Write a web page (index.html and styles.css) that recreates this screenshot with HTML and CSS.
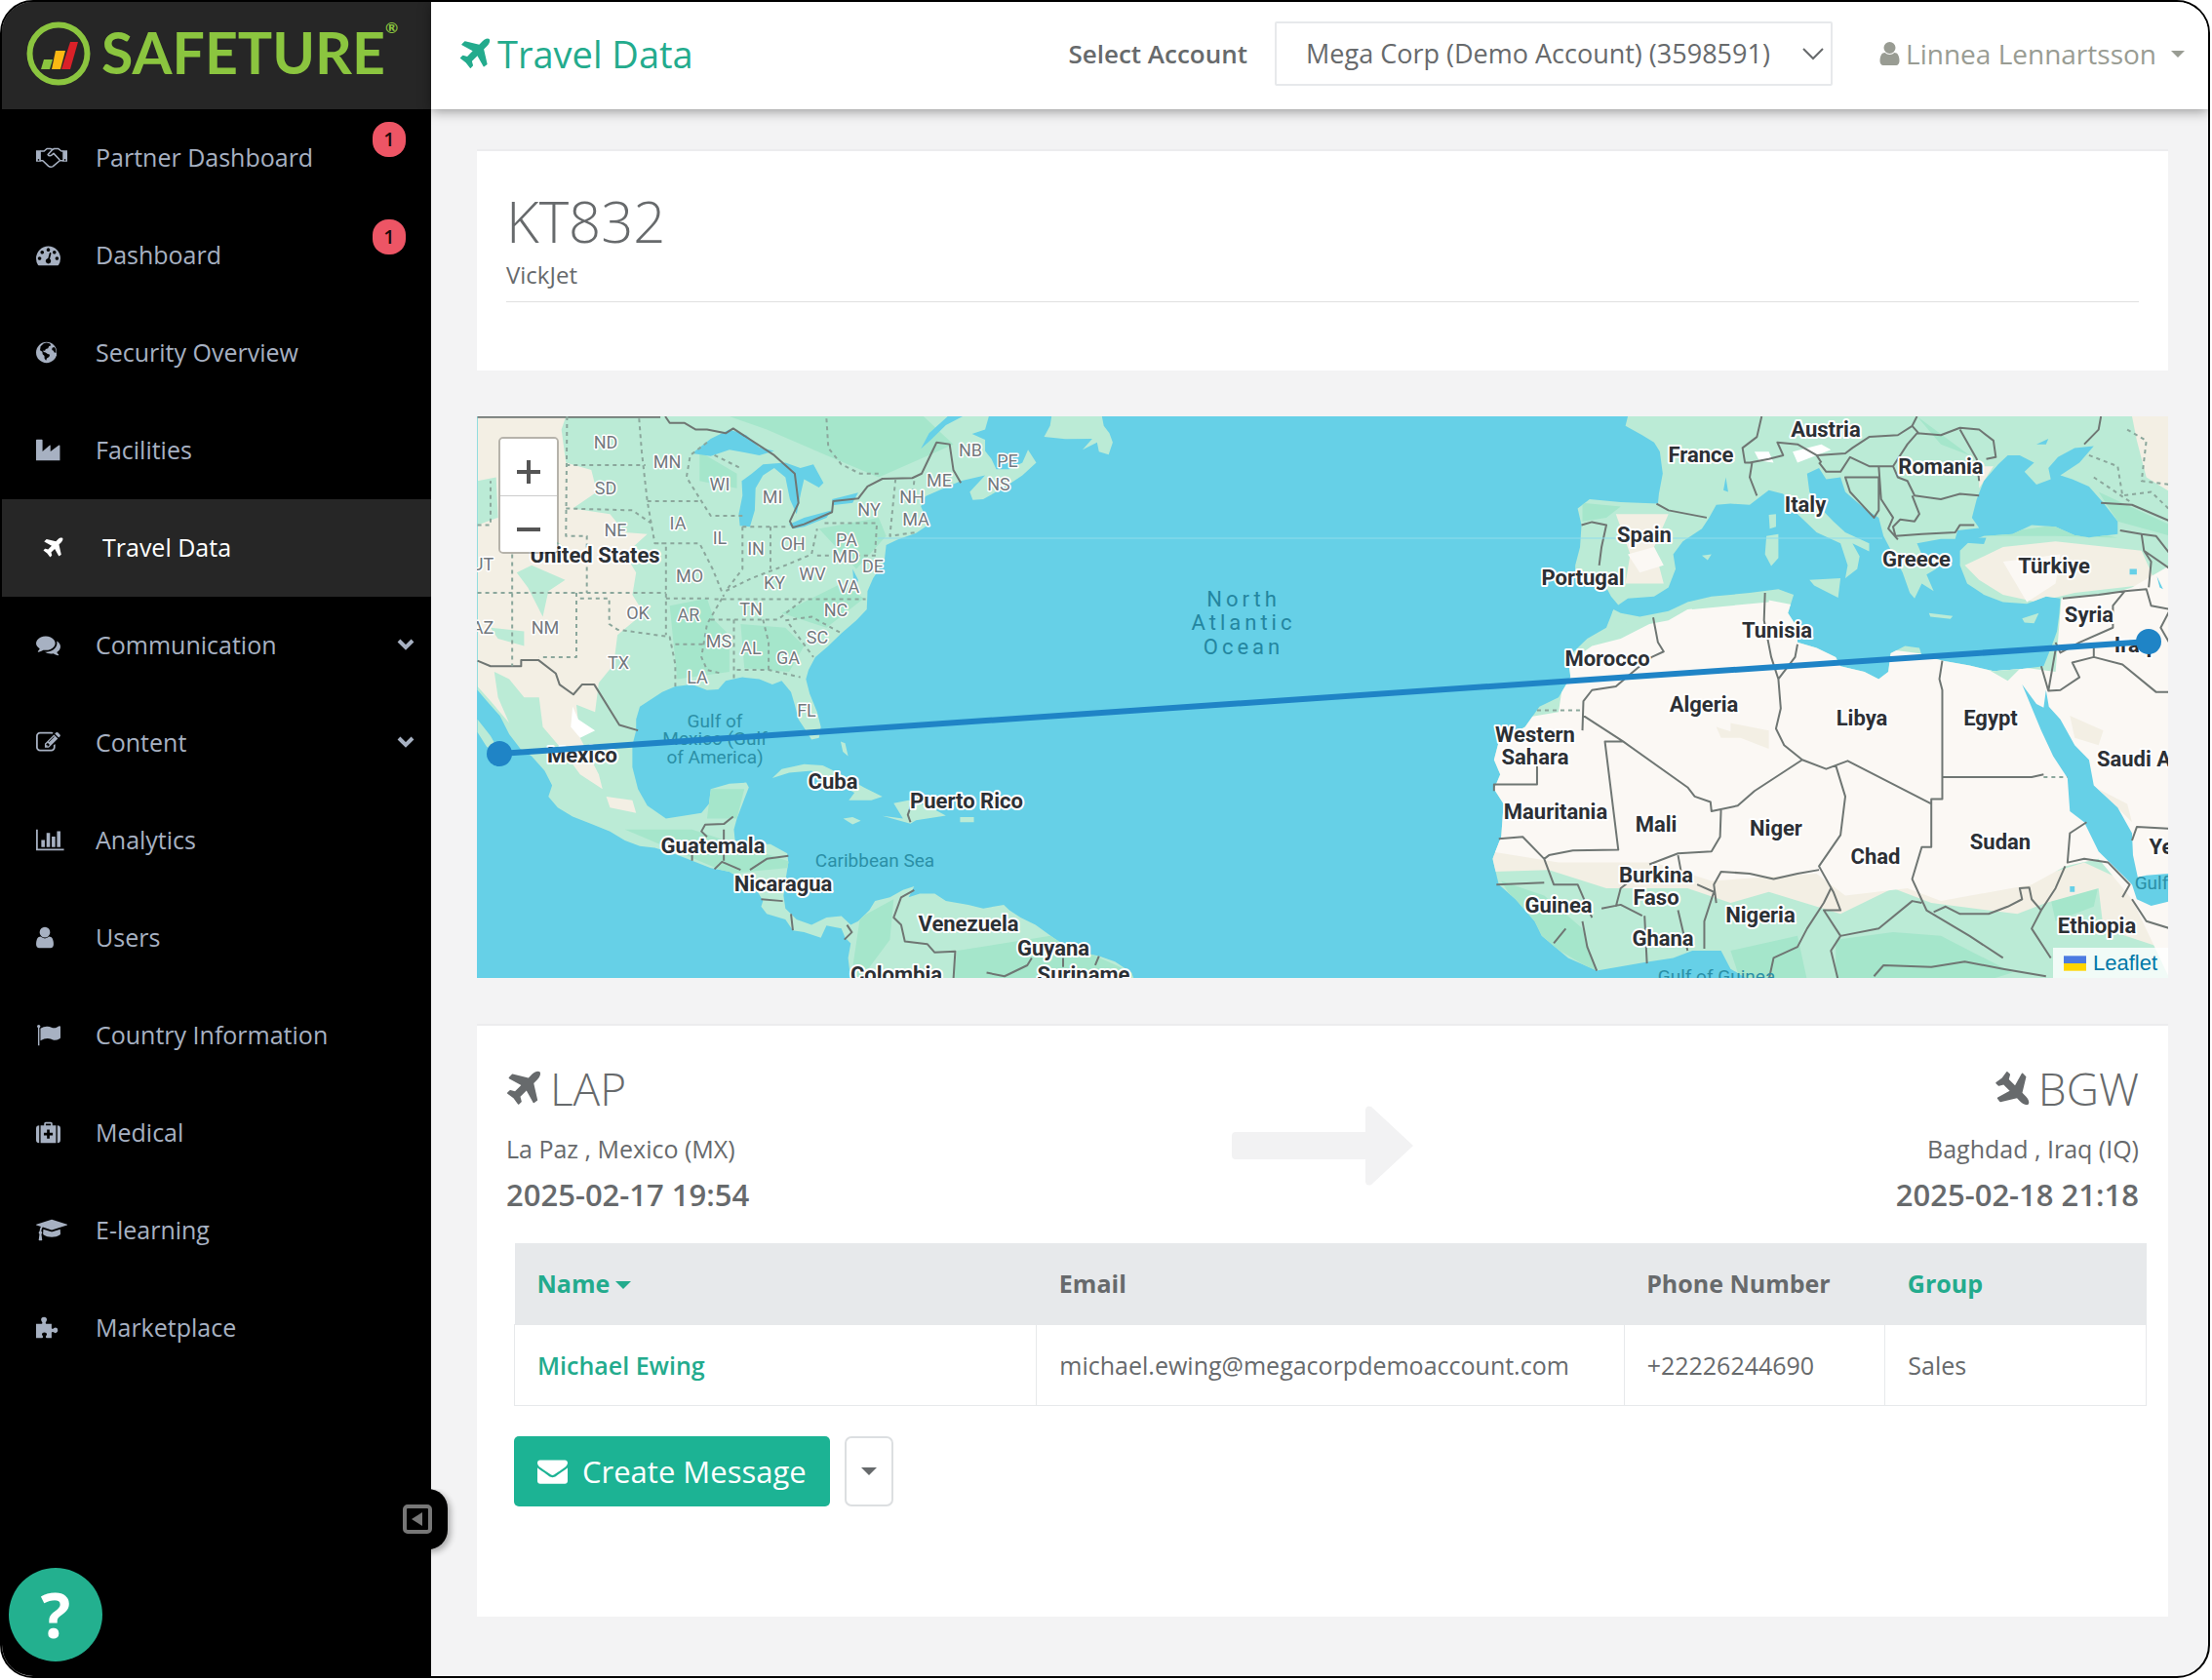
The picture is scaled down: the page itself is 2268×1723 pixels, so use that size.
FILE: index.html
```html
<!DOCTYPE html>
<html lang="en">
<head>
<meta charset="utf-8">
<title>Travel Data</title>
<link rel="stylesheet" href="styles.css">
</head>
<body>
<svg class="sprite" aria-hidden="true">
  <symbol id="plane" viewBox="150 108 1480 1480"><path d="M1568 160q44 52 12 148t-108 172l-161 161 160 696q5 19-12 33l-128 96q-7 6-19 6-4 0-7-1-15-3-21-16l-279-508-259 259 53 194q5 17-8 31l-96 96q-9 9-23 9h-2q-15-2-24-13l-189-252-252-189q-11-7-13-23-1-13 9-25l96-97q9-9 23-9 6 0 8 1l194 53 259-259-508-279q-14-8-17-24-2-16 9-27l128-128q14-13 30-8l665 159 160-160q76-76 172-108t148 12z"/></symbol>
  <symbol id="user" viewBox="256 0 1280 1792"><path d="M1536 1399q0 109-62.500 187t-150.500 78h-854q-88 0-150.500-78t-62.500-187q0-85 8.500-160.500t31.500-152 58.500-131 94-89 134.500-34.500q131 128 313 128t313-128q76 0 134.500 34.500t94 89 58.500 131 31.500 152 8.500 160.500zm-256-887q0 159-112.500 271.500t-271.500 112.500-271.500-112.500-112.500-271.500 112.500-271.500 271.500-112.500 271.500 112.500 112.500 271.500z"/></symbol>
</svg>
<div class="shell">
  <aside class="sidebar">
    <a class="brand" href="#" aria-label="Safeture">
      <svg class="brand-mark" viewBox="0 0 66 66"><circle cx="33" cy="33" r="29.500" fill="none" stroke="#8bc53f" stroke-width="6"/><path fill="#8bc53f" d="M18 39h9l-3 10h-9z"/><path fill="#fcb813" d="M30 30h10l-5 19h-9z"/><path fill="#da2128" d="M45 21h8l-8 28h-9z"/></svg>
      <span class="brand-name">SAFETURE</span><span class="brand-reg">®</span>
    </a>
    <nav class="menu">
      <a class="item" href="#"><span class="ico"><svg viewBox="0 0 2304 1792"><path fill="none" stroke="currentColor" stroke-width="110" stroke-linejoin="round" d="M300 430h290l200-180h270l140 70 130-70h290l240 180h150M1200 320L870 680q110 170 290 30l130-110 450 470M300 1130h190l420 400q150 120 330 20l500-420h260"/><path d="M0 380h350v820H0zM1954 380h350v820h-350z"/><circle cx="180" cy="1070" r="60" fill="#000"/><circle cx="2124" cy="1070" r="60" fill="#000"/></svg></span>Partner Dashboard<span class="badge">1</span></a>
      <a class="item" href="#"><span class="ico"><svg viewBox="0 0 1792 1792"><path d="M384 1152q0-53-37.500-90.500t-90.500-37.500-90.500 37.500-37.500 90.500 37.500 90.500 90.500 37.500 90.500-37.500 37.500-90.500zm192-448q0-53-37.500-90.500t-90.500-37.500-90.500 37.500-37.500 90.500 37.500 90.500 90.500 37.500 90.500-37.500 37.500-90.500zm428 481l101-382q6-26-7.500-48.500t-38.500-29.500-48 6.500-30 39.500l-101 382q-60 5-107 43.500t-63 98.500q-20 77 20 146t117 89 146-20 89-117q16-60-6-117t-72-91zm660-33q0-53-37.500-90.500t-90.500-37.500-90.500 37.500-37.500 90.500 37.500 90.500 90.500 37.500 90.500-37.500 37.500-90.500zm-640-640q0-53-37.500-90.500t-90.500-37.500-90.500 37.500-37.500 90.500 37.500 90.500 90.500 37.500 90.500-37.500 37.500-90.500zm448 192q0-53-37.500-90.500t-90.500-37.500-90.500 37.500-37.500 90.500 37.500 90.500 90.500 37.500 90.500-37.500 37.500-90.500zm320 448q0 261-141 483-19 29-54 29h-1402q-35 0-54-29-141-221-141-483 0-182 71-348t191-286 286-191 348-71 348 71 286 191 191 286 71 348z"/></svg></span>Dashboard<span class="badge">1</span></a>
      <a class="item" href="#"><span class="ico"><svg viewBox="0 0 1536 1792"><circle cx="768" cy="896" r="768"/><path fill="#000" d="M560 240l200-60 240 60 100 140-160 60-60 160-170 40-60 130-130-20 30 110 150 40 120 90 190 60-50 170-170 110-60 160-110-150-10-200-130-120-20-180-170-110 40-280zM1180 560l160-60 110 160 20 260-130-20-60-130-110-50z"/></svg></span>Security Overview</a>
      <a class="item" href="#"><span class="ico"><svg viewBox="0 0 1792 1792"><path d="M0 1664V180q0-52 52-52h368q52 0 52 52v826l520-446q64-50 64 32v414l600-446q96-60 96 32v1072z"/></svg></span>Facilities</a>
      <a class="item active" href="#"><span class="ico"><svg class="ico-plane"><use href="#plane"/></svg></span>Travel Data</a>
      <a class="item" href="#"><span class="ico"><svg viewBox="0 0 1792 1792"><path d="M1408 768q0 139-94 257t-256.500 186.500-353.500 68.500q-86 0-176-16-124 88-278 128-36 9-86 16h-3q-11 0-20.500-8t-11.500-21q-1-3-1-6.500t.5-6.500 2-6l2.500-5 3.500-5.500 4-5 4.500-5 4-4.500q5-6 23-25t26-29.500 22.500-29 25-38.500 20.500-44q-124-72-195-177t-71-224q0-139 94-257t256.500-186.500 353.500-68.500 353.500 68.500 256.500 186.500 94 257zm384 256q0 120-71 224.500t-195 176.500q10 24 20.500 44t25 38.500 22.500 29 26 29.500 23 25q1 1 4 4.500t4.500 5 4 5 3.500 5.500l2.500 5 2 6 .5 6.500-1 6.500q-3 14-13 22t-22 7q-50-7-86-16-154-40-278-128-90 16-176 16-271 0-472-132 58 4 88 4 161 0 309-45t264-129q125-92 192-212t67-254q0-77-23-152 129 71 204 178t75 230z"/></svg></span>Communication<svg class="chev" viewBox="0 0 18 12"><path d="M2 2l7 7 7-7"/></svg></a>
      <a class="item" href="#"><span class="ico"><svg viewBox="0 0 1792 1792"><path d="M888 1184l116-116-152-152-116 116v56h96v96h56zm440-720q-16-16-33 1l-350 350q-17 17-1 33t33-1l350-350q17-17 1-33zm80 594v190q0 119-84.500 203.500t-203.500 84.500h-832q-119 0-203.500-84.500t-84.500-203.500v-832q0-119 84.500-203.500t203.500-84.500h832q63 0 117 25 15 7 18 23 3 17-9 29l-49 49q-14 14-32 8-23-6-45-6h-832q-66 0-113 47t-47 113v832q0 66 47 113t113 47h832q66 0 113-47t47-113v-126q0-13 9-22l64-64q15-15 35-7t20 29zm-96-738l288 288-672 672h-288v-288zm444 132l-92 92-288-288 92-92q28-28 68-28t68 28l152 152q28 28 28 68t-28 68z"/></svg></span>Content<svg class="chev" viewBox="0 0 18 12"><path d="M2 2l7 7 7-7"/></svg></a>
      <a class="item" href="#"><span class="ico"><svg viewBox="0 0 2048 1792"><path d="M640 896v512h-256v-512h256zm384-512v1024h-256v-1024h256zm1024 1152v128h-2048v-1536h128v1408h1920zm-640-896v768h-256v-768h256zm384-384v1152h-256v-1152h256z"/></svg></span>Analytics</a>
      <a class="item" href="#"><span class="ico"><svg class="ico-user"><use href="#user"/></svg></span>Users</a>
      <a class="item" href="#"><span class="ico"><svg viewBox="0 0 1792 1792"><circle cx="192" cy="256" r="120"/><path d="M140 256h104v1408H140zM320 420q260-170 520-150 150 10 290 70 180 80 340 10l230-110q72-20 92 50v800q0 50-50 76-250 140-440 100-110-30-230-80-330-120-752 120z"/></svg></span>Country Information</a>
      <a class="item" href="#"><span class="ico"><svg viewBox="0 0 1792 1792"><path fill-rule="evenodd" d="M330 384h260V240q0-112 112-112h388q112 0 112 112v144h260v1280H330zM710 384h372V250H710zM800 680v230H570v196h230v230h196v-230h230V910H996V680z"/><path d="M230 384v1280q-230 0-230-230V614q0-230 230-230zM1562 384v1280q230 0 230-230V614q0-230-230-230z"/></svg></span>Medical</a>
      <a class="item" href="#"><span class="ico"><svg viewBox="0 0 2304 1792"><path d="M1774 836l18 316q4 69-82 128t-235 93.500-323 34.500-323-34.500-235-93.500-82-128l18-316 574 181q22 7 48 7t48-7zm530-324q0 23-22 31l-1120 352q-4 1-10 1t-10-1l-652-206q-43 34-71 111.500t-34 178.500q63 36 63 109 0 69-58 107l58 433q2 14-8 25-9 11-24 11h-192q-15 0-24-11-10-11-8-25l58-433q-58-38-58-107 0-73 65-111 11-207 98-330l-333-104q-22-8-22-31t22-31l1120-352q4-1 10-1t10 1l1120 352q22 8 22 31z"/></svg></span>E-learning</a>
      <a class="item" href="#"><span class="ico"><svg viewBox="0 0 1664 1792"><path d="M0 620h400q60 0 60-70 0-40-50-110-40-60-40-130 0-170 210-182 210 12 210 182 0 70-40 130-50 70-50 110 0 70 60 70h380v310q0 60 80 60 40 0 100-60 50-40 110-40 170 20 170 210t-170 210q-60 0-110-50-60-50-100-50-80 0-80 80v374H770q-60-10-60-80 0-30 40-90 40-50 40-110 0-130-180-134-180 4-180 134 0 60 40 110 40 60 40 90 0 70-60 80H0z"/></svg></span>Marketplace</a>
    </nav>
    <button class="collapse" type="button" aria-label="Collapse menu"><svg viewBox="0 0 30 30"><rect x="2" y="2" width="26" height="26" rx="3" fill="none" stroke="#777" stroke-width="4"/><path d="M20 8v14L9 15z" fill="#777"/></svg></button>
    <button class="help" type="button" aria-label="Help">?</button>
  </aside>
  <div class="page">
    <header class="topbar">
      <h1 class="title"><svg><use href="#plane"/></svg>Travel Data</h1>
      <label class="account-label" for="account">Select Account</label>
      <div class="account">
        <select id="account"><option>Mega Corp (Demo Account) (3598591)</option></select>
        <svg viewBox="0 0 24 14"><path d="M2 2l10 10L22 2"/></svg>
      </div>
      <button class="profile" type="button"><svg class="profile-ico"><use href="#user"/></svg>Linnea Lennartsson<span class="caret"></span></button>
    </header>
    <main class="content">
      <section class="card flight">
        <h2>KT832</h2>
        <p>VickJet</p>
        <hr>
      </section>
      <section class="map">
        <svg class="map-art" viewBox="489 429 1734 576" role="img" aria-label="Route from La Paz to Baghdad">
          <defs>
            <path id="americas" d="M25 24H1395L1385 60 1350 72 1385 88 1385 118 1402 140 1415 168 1450 168 1485 150 1500 115 1522 150 1485 185 1440 215 1380 250 1352 252 1344 230 1385 185 1320 200 1270 222 1225 242 1213 270 1235 318 1200 342 1150 360 1120 375 1115 420 1085 465 1070 500 1068 550 1040 580 1000 615 965 650 930 680 912 715 905 740 915 780 935 830 945 870 940 900 920 905 905 880 885 850 875 810 865 775 840 745 815 755 780 740 735 735 710 740 690 745 670 768 640 770 600 755 555 760 520 775 490 795 460 815 450 850 450 880 440 920 440 980 455 1040 480 1085 530 1120 580 1112 625 1105 645 1080 650 1040 700 1025 745 1022 752 1035 735 1080 720 1120 712 1150 715 1180 760 1190 810 1190 855 1215 858 1240 850 1290 845 1330 850 1365 880 1395 920 1410 960 1390 1000 1386 1025 1410 1045 1400 1075 1370 1090 1345 1130 1335 1165 1315 1195 1305 1180 1335 1210 1325 1250 1325 1280 1345 1340 1355 1380 1365 1435 1355 1450 1370 1480 1390 1520 1410 1568 1445 1620 1480 1690 1495 1733 1510 1777 1540 1785 1560H1025L1018 1500 1025 1460 1010 1445 1000 1420 960 1412 945 1445 900 1430 870 1425 850 1395 800 1380 785 1360 790 1345 770 1310 740 1290 700 1265 650 1255 600 1235 550 1215 500 1200 460 1195 420 1180 380 1155 330 1135 280 1115 240 1090 215 1060 225 1030 205 990 170 950 140 930 110 890 85 840 50 800 25 770ZM25 850L60 895 88 945 50 925 25 885ZM1563 24L1559 50 1543 80 1600 86 1672 85 1646 115 1685 95 1690 120 1716 128 1727 95 1718 70 1703 50 1698 24ZM815 1010L840 985 900 972 950 975 1000 1000 1060 1035 1110 1060 1080 1070 1020 1070 1035 1050 980 1020 920 990 860 995ZM1005 1120L1030 1116 1052 1126 1030 1136ZM1110 1113L1165 1120 1140 1078 1180 1070 1240 1090 1280 1112 1200 1125 1185 1134ZM1318 1116H1355V1130H1318ZM998 910L1010 915 1018 950 1004 938Z"/>
            <path id="oldworld" d="M345 24L340 50 375 75 400 95 412 120 418 180 410 235 408 262 330 258 265 250 240 275 248 320 245 380 235 430 235 460 265 485 300 490 310 515 325 538 345 520 400 515 430 490 445 440 440 400 460 365 500 330 515 300 530 265 560 262 600 265 640 225 670 235 700 290 740 340 790 370 805 430 800 465 825 440 830 405 815 370 850 392 850 370 800 340 775 310 745 270 725 230 720 180 745 165 760 195 790 190 800 230 840 275 870 300 880 350 900 400 920 450 935 505 945 520 960 480 985 500 970 455 990 440 960 400 950 370 1000 358 1030 358 1035 335 1080 328 1065 300 1075 250 1090 200 1120 155 1140 130 1165 130 1195 150 1175 175 1200 210 1230 195 1225 165 1245 135 1280 110 1320 105 1290 150 1250 185 1275 195 1310 215 1340 260 1370 310 1370 345 1310 354 1280 348 1240 325 1190 320 1150 345 1090 350 1060 365 1040 390 1040 430 1055 480 1090 510 1130 530 1180 535 1220 515 1250 520 1248 560 1243 610 1232 650 1215 705 1170 712 1110 718 1060 703 1005 690 960 675 955 655 925 650 895 670 890 720 870 740 840 720 790 705 780 680 740 655 700 640 700 600 680 560 692 510 660 495 600 505 520 515 470 530 430 555 370 570 330 560 315 550 300 600 260 630 220 680 225 735 200 790 160 815 130 870 75 910 65 960 78 1000 65 1040 85 1080 80 1170 62 1230 75 1300 110 1340 150 1400 165 1440 220 1500 280 1535 380 1512 440 1500 480 1480 540 1480 560 1530 600 1560H1480V24ZM725 470L790 465 785 518 735 485ZM635 350L660 345 660 410 645 432 632 400ZM640 292L655 290 655 325 642 330ZM975 560L1025 568 1020 576 978 570ZM1170 575L1205 560 1195 588 1175 586ZM500 403L520 400 512 416Z"/>
            <clipPath id="clip-americas"><use href="#americas"/></clipPath>
            <clipPath id="clip-oldworld"><use href="#oldworld"/></clipPath>
          </defs>
          <rect class="sea" x="489" y="429" width="1734" height="576"/>
          <g transform="translate(480 420) scale(.3827 .3763)">
            <use class="land" href="#americas"/>
            <g clip-path="url(#clip-americas)">
              <path class="forest" d="M700 24L800 60 960 130 1100 190 1300 100 1220 24ZM540 540L640 520 660 580 700 620 700 720 560 740ZM730 590L850 600 900 650 860 720 740 710ZM620 120L720 180 720 220 620 200ZM840 560L1000 480 1060 520 960 600ZM650 1040H740L720 1120 640 1120ZM420 1150L600 1150 900 1250 700 1270ZM1310 1480L1560 1440 1780 1540V1560H1300ZM940 330L1100 300 1120 350 1040 440ZM1050 1390L1140 1340 1130 1450 1050 1560H1025Z"/>
              <path class="steppe" d="M25 24H262L250 60 262 150 330 170 345 230 280 275 380 290 420 340 480 345 420 400 450 450 440 510 470 560 400 620 390 700 350 750 340 830 290 810 300 900 350 1000 360 1040 300 1000 250 930 200 870 190 790 150 790 110 740 70 720 80 790 110 860 60 800 25 760ZM370 1060L440 1070 450 1105 380 1090Z"/>
              <path class="land" d="M130 450L170 430 260 470 215 500 200 570 160 490ZM25 200L75 190 80 300 25 320ZM60 600L150 610 150 650 80 630ZM180 330L260 380 150 380Z"/>
              <path class="snow" d="M280 815L295 850 340 880 300 900 275 870Z"/>
            </g>
            <path class="sea" d="M600 125L650 85 700 60 745 75 780 108 820 118 780 130 740 122 700 115 650 132ZM733 200L760 180 790 155 850 150 890 165 925 155 952 205 940 218 900 195 892 230 880 290 862 250 850 190 820 165 790 185 770 220 768 280 755 325 728 322 725 290 735 240ZM860 318L900 300 975 280 960 300 900 325 870 330ZM975 250L1045 232 1030 260 980 266ZM1213 112L1235 70 1285 24H1325L1280 48 1240 88ZM1030 440L1045 470 1035 500Z"/>
            <path class="border" d="M25 26H515M528 24L540 42 580 42 610 60 640 60 690 70 710 57 820 130 875 180 885 260 862 310 870 327 900 318 975 285 978 255 1045 248 1070 215 1110 194 1190 192 1215 180 1255 95 1290 100 1300 170 1320 205M25 690L60 705H142V688H188L235 725 245 755 282 782 305 755H338L405 865 455 880M710 1115L685 1135 635 1137 625 1155 640 1170M685 1150V1235M600 1210V1235M660 1258L680 1238 730 1260M755 1260L800 1230 858 1222M785 1340L843 1345M865 1380L870 1425M1015 1410L1028 1430 1008 1450M1195 1315L1160 1335 1140 1390 1160 1410 1170 1455 1230 1462 1250 1485 1305 1482 1300 1560M1389 1540L1437 1550 1498 1520 1510 1500M1594 1500V1525M1690 1495L1680 1520M1190 1075L1178 1110 1185 1130"/>
            <path class="border state" d="M265 24L262 350H318V505M262 157H475M458 30L465 120 480 255 500 370 530 370V620M262 275L440 280 490 315M480 255H625M500 370H620L655 440 685 515M640 95L595 130 585 190 625 255 650 295H735M660 130L730 165M25 505H530M118 400V705M290 505V680H190M300 520H378V590L400 605 540 625 555 700V760M530 520H655M555 645H630M735 325V440L690 500 760 465 850 430 920 400 935 330M810 325V440M735 325H860M660 522H1065M650 578H830L895 525M712 578V740M790 578L805 640V720M720 715H805L890 735M680 520L640 590 625 680 640 715 680 725M860 590L925 680M850 580L920 570 1000 615M935 403H1095M955 315H1095L1090 400M1145 195L1130 350 1200 340M960 30L965 110 1000 155 1050 180H1110M1195 200L1190 250M25 320H60V200"/>
          </g>
          <g transform="translate(1500 420) scale(.49 .3763)">
            <use class="land" href="#oldworld"/>
            <g clip-path="url(#clip-oldworld)">
              <path class="forest" d="M80 1290L170 1330 250 1420 280 1540 150 1440ZM780 1450L900 1430 1000 1440 1150 1540 1100 1560H780ZM1230 1340L1330 1300 1320 1360 1240 1400ZM560 1480L700 1440 720 1560H580ZM250 260L330 270 300 300 250 310ZM950 24L1060 130 1000 100ZM1080 350L1240 320 1370 355 1240 350ZM1330 230L1480 320V350L1370 310Z"/>
              <path class="steppe" d="M60 1180L300 1190 600 1240 900 1280 1200 1280 1300 1240 1400 1300 1480 1380V1480L1340 1420 1330 1310 1220 1350 1160 1380 980 1350 900 1310 790 1380 640 1320 560 1350 470 1310 300 1310 180 1260 60 1265ZM1050 430L1130 380 1240 365 1420 390 1450 480 1280 505 1200 530 1130 510 1080 470ZM320 290L430 290 400 380 420 480 340 480 350 400ZM1400 24H1480V230L1430 190 1410 90ZM1080 160L1110 160 1080 220Z"/>
              <path class="desert" d="M200 830L215 700 270 650 330 630 390 590 430 580 470 550 640 525 700 540 780 640 1240 720 1252 520 1350 510 1400 490 1480 430V1560L1400 1340 1330 1230 1260 1250 1190 1300 1000 1345 930 1310 800 1330 740 1270 520 1290 400 1240 200 1240 60 1210V860ZM345 400L400 380 420 430 370 450ZM1130 420L1250 400 1240 480 1180 530Z"/>
              <path class="steppe" d="M560 860L640 880 640 930 560 890ZM1270 840L1340 880 1330 920 1280 900ZM1330 1040L1390 1080 1400 1130ZM530 870L600 900 540 900Z"/>
              <path class="snow" d="M610 120L640 120 650 150 620 145ZM690 120L750 100 770 115 700 150Z"/>
              <path class="land" d="M1100 715L1145 690 1165 712 1140 745ZM470 530L640 505 640 530 480 550ZM310 550L345 590 320 620Z"/>
            </g>
            <path class="sea" d="M1170 755L1200 808 1215 818 1220 770 1226 815 1250 850 1280 920 1310 960 1320 1030 1370 1090 1400 1160 1402 1220 1412 1280 1430 1275 1480 1270V1345L1440 1358 1410 1340 1400 1300 1385 1280 1330 1210 1300 1130 1270 1100 1265 1010 1235 950 1210 880ZM1040 355L1095 355 1090 372 1045 368ZM1200 100L1225 85 1220 100ZM1395 440H1410V455H1395ZM1452 460L1465 495 1458 490ZM1270 1305H1280V1320H1270ZM550 190L555 230 545 225Z"/>
            <path class="border" d="M398 572L408 640 420 665 395 680 365 710 320 760 270 770 252 800 250 880M155 960V1027H65V1045M250 838L335 910 470 1035 485 1060 518 1075 520 1100 575 1085 610 1045 710 960 760 985 805 963 980 1080M335 910H297L325 1205 230 1207 180 1220 170 1230M75 1175L125 1170 170 1230 190 1300 240 1300 270 1390M540 1095L538 1170 520 1210 450 1215 390 1245M780 975L800 1060 790 1165 745 1250 775 1320 790 1370 755 1370 790 1440 770 1480 785 1560M530 1350L525 1300 540 1265 600 1270 650 1285 700 1270 745 1260M632 505L630 580 645 680 660 740 665 820 655 875 672 920 710 960M700 645L695 680 660 740M1003 690L997 740 1003 770V1067H980V1198H960L940 1285 970 1370 1060 1440 1130 1500M1003 1007H1190L1215 1000M790 1440L870 1420 940 1345 960 1350M985 1375L1010 1360 1040 1380 1100 1380 1140 1360 1170 1340 1165 1310 1185 1308 1190 1340 1210 1370 1190 1420 1230 1500M1305 1130L1270 1160 1265 1240 1300 1230 1350 1240 1395 1300 1380 1335M1400 1340L1430 1400 1480 1420M1260 1250L1240 1310 1210 1370M1400 1180L1410 1143 1480 1148M490 1300L525 1320 505 1400V1475M450 1370L470 1480M450 1220L460 1290M380 1385L385 1515M290 1365L330 1355 375 1385M320 1360L330 1310 380 1260M70 1300L170 1295M215 1420L190 1460M250 1400L260 1470 280 1535M640 1560L650 1500 700 1470 720 1420 755 1350 770 1310M860 1550L880 1520 980 1525 1050 1510 1130 1530 1220 1550M1255 520L1330 510 1385 500 1360 540V600L1290 640 1250 668 1240 640M1385 500L1430 495 1440 540 1480 550 1460 600 1480 645M1320 655V680L1380 700 1450 775H1480M1320 680L1275 695 1290 735 1250 770 1225 772 1240 660M1225 772L1210 705M1375 335L1420 345 1425 390 1440 420 1435 490M1425 390L1480 440M1335 260L1400 265 1480 310M1420 345L1450 350 1480 400"/>
            <path class="border" d="M405 262L430 280 510 300M248 320L270 312 300 320 290 380 285 430M625 24L615 80 585 110 590 150 605 150 600 190 615 240M600 150L640 140 670 130 658 95 700 100 740 130 800 125 815 110 850 80 910 75 940 50 950 24M745 150L760 175 790 175 810 135 850 160 900 160 930 100 950 70 1000 75 1040 55 1080 60 1110 90 1115 135 1095 140M940 50L955 72M1040 60L1075 140 1080 200M900 160L910 190 930 200 945 240 1000 250 1040 235 1080 240M800 190H870V280L860 300 810 230ZM870 160L875 250 900 300 890 330 910 360M940 240L955 290 945 310 915 305 900 325 905 350 960 345 1030 340 1040 320 1070 320M1335 24L1330 60 1300 100M740 130L750 150"/>
            <path class="border state" d="M155 825H250M1215 1007H1265M1310 130L1370 160 1380 240 1440 230 1480 280M1390 60L1430 90 1420 200 1480 210M1320 190L1400 260"/>
          </g>
          <path class="tile-seam" d="M900 554H1930"/>
          <g class="states">
            <text x="621" y="462">ND</text><text x="621" y="509">SD</text><text x="631" y="552">NE</text><text x="684" y="482">MN</text><text x="695" y="545">IA</text><text x="738" y="505">WI</text><text x="792" y="518">MI</text><text x="738" y="560">IL</text><text x="775" y="571">IN</text><text x="813" y="566">OH</text><text x="707" y="599">MO</text><text x="794" y="606">KY</text><text x="833" y="597">WV</text><text x="868" y="562">PA</text><text x="867" y="579">MD</text><text x="895" y="589">DE</text><text x="870" y="610">VA</text><text x="857" y="634">NC</text><text x="770" y="633">TN</text><text x="706" y="639">AR</text><text x="654" y="637">OK</text><text x="559" y="652">NM</text><text x="495" y="652">AZ</text><text x="495" y="587">UT</text><text x="634" y="688">TX</text><text x="737" y="666">MS</text><text x="770" y="673">AL</text><text x="808" y="683">GA</text><text x="838" y="662">SC</text><text x="715" y="703">LA</text><text x="827" y="737">FL</text><text x="891" y="531">NY</text><text x="935" y="518">NH</text><text x="939" y="541">MA</text><text x="963" y="501">ME</text><text x="995" y="470">NB</text><text x="1033" y="481">PE</text><text x="1024" y="505">NS</text>
          </g>
          <g class="waters">
            <text x="733" y="748">Gulf of</text><text x="733" y="766">Mexico (Gulf</text><text x="733" y="785">of America)</text><text x="897" y="891">Caribbean Sea</text><text x="2206" y="914">Gulf</text><text x="1760" y="1010">Gulf of Guinea</text>
          </g>
          <g class="ocean"><text x="1275" y="624">North</text><text x="1275" y="648">Atlantic</text><text x="1275" y="673">Ocean</text></g>
          <g class="countries">
            <text x="610" y="579">United States</text><text x="597" y="784">Mexico</text><text x="854" y="811">Cuba</text><text x="991" y="831">Puerto Rico</text><text x="731" y="877">Guatemala</text><text x="803" y="916">Nicaragua</text><text x="993" y="957">Venezuela</text><text x="1080" y="982">Guyana</text><text x="1111" y="1009">Suriname</text><text x="919" y="1009">Colombia</text>
            <text x="1872" y="450">Austria</text><text x="1744" y="476">France</text><text x="1990" y="488">Romania</text><text x="1851" y="527">Italy</text><text x="1686" y="558">Spain</text><text x="1623" y="602">Portugal</text><text x="1965" y="583">Greece</text><text x="2106" y="590">Türkiye</text><text x="2142" y="640">Syria</text><text x="2187" y="671">Iraq</text><text x="1822" y="656">Tunisia</text><text x="1648" y="685">Morocco</text><text x="1747" y="732">Algeria</text><text x="1909" y="746">Libya</text><text x="2041" y="746">Egypt</text><text x="1574" y="763">Western</text><text x="1574" y="786">Sahara</text><text x="1595" y="842">Mauritania</text><text x="1698" y="855">Mali</text><text x="1821" y="859">Niger</text><text x="1923" y="888">Chad</text><text x="2051" y="873">Sudan</text><text x="2188" y="788">Saudi A</text><text x="2216" y="878">Ye</text><text x="1698" y="907">Burkina</text><text x="1698" y="930">Faso</text><text x="1598" y="938">Guinea</text><text x="1705" y="972">Ghana</text><text x="1805" y="948">Nigeria</text><text x="2150" y="959">Ethiopia</text>
          </g>
          <path class="route" d="M512 775L2203 660"/>
          <circle class="stop" cx="512" cy="775" r="13"/><circle class="stop" cx="2203" cy="660" r="13"/>
        </svg>
        <div class="zoom">
          <button type="button" aria-label="Zoom in"><svg viewBox="0 0 24 24"><path d="M12 0v24M0 12h24"/></svg></button>
          <button type="button" aria-label="Zoom out"><svg viewBox="0 0 24 24"><path d="M0 12h24"/></svg></button>
        </div>
        <a class="leaflet" href="#"><svg viewBox="0 0 12 8"><path fill="#4c7be1" d="M0 0h12v4H0z"/><path fill="#ffd500" d="M0 4h12v4H0z"/></svg>Leaflet</a>
      </section>
      <section class="card trip">
        <div class="legs">
          <div class="leg">
            <h3><svg><use href="#plane"/></svg>LAP</h3>
            <p>La Paz , Mexico (MX)</p>
            <time>2025-02-17 19:54</time>
          </div>
          <svg class="arrow" viewBox="0 0 186 82"><path d="M4 27H137V4q1-5 6-3l43 40-43 40q-5 2-6-3V55H4q-4 0-4-4V31q0-4 4-4z"/></svg>
          <div class="leg arrive">
            <h3><svg class="landing"><use href="#plane"/></svg>BGW</h3>
            <p>Baghdad , Iraq (IQ)</p>
            <time>2025-02-18 21:18</time>
          </div>
        </div>
        <div class="travellers">
          <table>
            <thead><tr><th class="c-name"><a href="#">Name<span class="caret"></span></a></th><th class="c-mail">Email</th><th class="c-phone">Phone Number</th><th class="c-group"><a href="#">Group</a></th></tr></thead>
            <tbody><tr><td><a href="#">Michael Ewing</a></td><td>michael.ewing@megacorpdemoaccount.com</td><td>+22226244690</td><td>Sales</td></tr></tbody>
          </table>
          <div class="actions">
            <button class="create" type="button"><svg viewBox="0 0 1792 1792"><path d="M1792 710v794q0 66-47 113t-113 47h-1472q-66 0-113-47t-47-113v-794q44 49 101 87 362 246 497 345 57 42 92.500 65.500t94.500 48 110 24.500h2q51 0 110-24.500t94.500-48 92.500-65.500q170-123 498-345 57-39 100-87zm0-294q0 79-49 151t-122 123q-376 261-468 325-10 7-42.500 31t-54 38.500-52 32.500-57.500 27-50 9h-2q-23 0-50-9t-57.500-27-52-32.500-54-38.500-42.500-31q-91-64-262-182.500t-205-142.500q-62-42-117-115.500t-55-136.500q0-78 41.500-130t118.500-52h1472q65 0 112.500 47t47.500 113z"/></svg>Create Message</button>
            <button class="more" type="button" aria-label="More actions"><span class="caret"></span></button>
          </div>
        </div>
      </section>
    </main>
  </div>
</div>
</body>
</html>
```
FILE: styles.css
```css
* { box-sizing: border-box; }
body { margin: 0; background: #fff; color: #676a6c; font: 25px/36px "Open Sans", sans-serif; }
h1, h2, h3, p { margin: 0; }
a { color: inherit; text-decoration: none; }
button { font: inherit; color: inherit; border: 0; background: none; padding: 0; cursor: pointer; }
svg { display: block; flex: none; fill: currentColor; }
.sprite { position: absolute; width: 0; height: 0; }
.shell { display: flex; min-height: calc(100vh - 2px); margin: 0 2px 2px 0; border: 2px solid #000; border-radius: 34px; overflow: hidden; background: #f3f3f4; }

.sidebar { position: relative; flex: 0 0 440px; background: #000; color: #a7b1c2; }
.brand { display: flex; align-items: flex-start; height: 110px; padding: 20px 0 0 25px; background: #262626; color: #8bc53f; }
.brand-mark { width: 66px; height: 66px; }
.brand-name { margin-left: 11px; font: 700 59px/64px Lato, sans-serif; }
.brand-reg { font: 700 16px/12px Lato, sans-serif; }
.item { position: relative; display: flex; align-items: center; height: 100px; padding: 0 0 2px 35px; font-size: 25px; }
.item.active { background: #262626; color: #fff; padding-left: 42px; }
.ico { width: 61px; }
.ico svg { height: 25px; width: auto; }
.ico .ico-plane { width: 21px; height: 21px; }
.ico .ico-user { width: 18px; height: 25px; }
.badge { position: absolute; right: 26px; top: 13px; width: 34px; height: 36px; border-radius: 16px; background: #ed5565; color: #1c0a0c; font: 600 20px/36px "Open Sans", sans-serif; text-align: center; }
.chev { margin: 0 17px 0 auto; width: 18px; height: 12px; fill: none; stroke: currentColor; stroke-width: 4; }
.collapse { position: absolute; z-index: 3; right: -17px; bottom: 130px; display: flex; align-items: center; width: 60px; height: 62px; padding-left: 14px; border-radius: 0 20px 20px 0; background: #000; box-shadow: 3px 3px 6px rgba(0, 0, 0, .3); clip-path: inset(0 -12px -12px 0); }
.collapse svg { width: 30px; height: 30px; }
.help { position: absolute; left: 7px; bottom: 15px; width: 96px; height: 96px; border-radius: 50%; background: #23b08f; color: #fff; font: 700 64px/96px "Open Sans", sans-serif; }

.page { flex: 1; min-width: 0; }
.topbar { position: relative; display: flex; align-items: center; height: 110px; padding: 0 24px 4px 29px; background: #fff; box-shadow: 0 2px 12px rgba(0, 0, 0, .4); }
.title { display: flex; align-items: center; gap: 7px; margin-right: auto; color: #23ab8d; font: 400 38px/52px "Open Sans", sans-serif; }
.title svg { width: 32px; height: 32px; }
.account-label { font-weight: 600; font-size: 26px; margin-right: 28px; }
.account { position: relative; width: 572px; }
.account select { appearance: none; width: 100%; height: 66px; padding: 0 60px 0 30px; border: 2px solid #e7e9eb; border-radius: 2px; background: #fff; color: #676a6c; font: 27px/36px "Open Sans", sans-serif; }
.account svg { position: absolute; right: 8px; top: 26px; width: 24px; height: 14px; fill: none; stroke: #676a6c; stroke-width: 2; pointer-events: none; }
.profile { display: flex; align-items: center; margin-left: 48px; color: #999c93; font-size: 28px; }
.profile-ico { width: 21px; height: 28px; margin-right: 6px; }
.caret { display: inline-block; border: 7px solid transparent; border-top-color: currentColor; border-bottom: 0; }
.profile .caret { margin-left: 15px; }

.content { display: flex; flex-direction: column; gap: 47px; padding: 41px 41px 57px 47px; }
.card { background: #fff; border-top: 2px solid #ececee; padding: 30px; }
.flight { padding-bottom: 70px; }
.flight h2 { font: 300 58px/83px "Open Sans", sans-serif; }
.flight p { font-size: 24px; line-height: 28px; }
.flight hr { margin: 13px 0 0; border: 0; border-top: 1px solid #e0e0e0; }

.map { position: relative; }
.map-art { width: 100%; height: auto; }
.sea { fill: #66d0e7; }
.land { fill: #bbebd6; }
.forest { fill: #a5e6cb; }
.steppe { fill: #f3efe4; }
.desert { fill: #fbf8f4; }
.snow { fill: #fff; }
.border { fill: none; stroke: #6f7673; stroke-width: 2; stroke-linejoin: round; vector-effect: non-scaling-stroke; }
.state { stroke: #8ba79c; stroke-dasharray: 4 4; }
.tile-seam { fill: none; stroke: #8fdcec; stroke-width: 1; }
.map-art text { font-family: Roboto, sans-serif; text-anchor: middle; }
.states { fill: #72787d; stroke: #fff; stroke-width: 3; paint-order: stroke; stroke-linejoin: round; font-size: 18px; }
.countries { fill: #2c3035; stroke: #fff; stroke-width: 4; paint-order: stroke; stroke-linejoin: round; font-size: 22px; font-weight: 700; }
.waters { fill: #2b8fa6; font-size: 19px; }
.ocean { fill: #2486a0; font-size: 22px; letter-spacing: 4px; }
.route { fill: none; stroke: #1f84c6; stroke-width: 6; }
.stop { fill: #1f84c6; }
.zoom { position: absolute; left: 22px; top: 21px; width: 62px; border: 2px solid rgba(0, 0, 0, .25); border-radius: 5px; background-clip: padding-box; overflow: hidden; }
.zoom button { display: flex; align-items: center; justify-content: center; width: 100%; height: 58px; padding-top: 10px; background: #fff; }
.zoom button + button { border-top: 1px solid #ccc; }
.zoom svg { width: 24px; height: 24px; stroke: #555; stroke-width: 4; }
.leaflet { position: absolute; right: 0; bottom: 0; display: flex; align-items: center; gap: 7px; height: 31px; padding: 0 11px; background: rgba(255, 255, 255, .8); color: #0078a8; font: 22px/31px "Liberation Sans", sans-serif; }
.leaflet svg { width: 23px; height: 16px; }

.trip { padding: 30px 30px 113px; }
.legs { display: flex; align-items: center; justify-content: space-between; }
.leg h3 { display: flex; align-items: center; gap: 9px; height: 68px; font: 300 46px/68px "Open Sans", sans-serif; }
.leg h3 svg { width: 36px; height: 36px; }
.leg .landing { transform: rotate(90deg); }
.leg p { margin-top: 10px; font-size: 25px; line-height: 36px; }
.leg time { display: block; margin-top: 7px; font-size: 31px; line-height: 44px; font-weight: 600; }
.arrive { text-align: right; }
.arrive h3 { justify-content: flex-end; }
.arrow { width: 186px; height: 82px; margin-top: 20px; fill: #f2f2f3; }
.travellers { margin: 28px -8px 0 8px; }
table { width: 100%; border-collapse: collapse; table-layout: fixed; }
th, td { height: 83px; padding: 0 23px; text-align: left; font-weight: 400; font-size: 25px; }
th { background: #e7e9eb; font-weight: 700; }
td { border: 1px solid #e7e9eb; }
.c-name { width: 32%; }
.c-mail { width: 36%; }
.c-phone, .c-group { width: 16%; }
table a { color: #23ab8d; font-weight: 600; }
th a { font-weight: 700; }
th .caret { margin: 0 0 4px 6px; border-width: 8px 8px 0; }
.actions { display: flex; gap: 15px; margin-top: 31px; }
.create { display: flex; align-items: center; gap: 15px; height: 72px; padding: 0 24px; border-radius: 5px; background: #1cb394; color: #fff; font-size: 31px; }
.create svg { width: 31px; height: 31px; }
.more { width: 50px; height: 72px; border: 2px solid #dcdfe1; border-radius: 7px; background: #fff; }
.more .caret { margin-bottom: 6px; border-width: 8px 8px 0; }
```
